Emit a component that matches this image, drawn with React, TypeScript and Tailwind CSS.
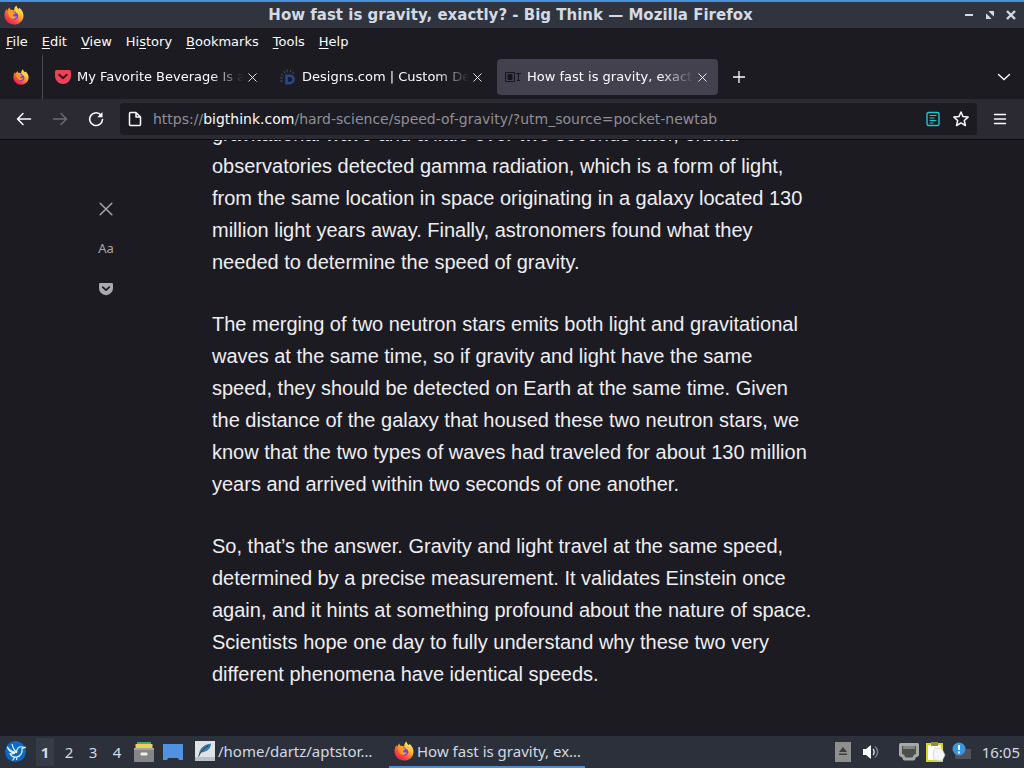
import type { ReactNode } from "react";

const menus = [
  { before: "", key: "F", after: "ile" },
  { before: "", key: "E", after: "dit" },
  { before: "", key: "V", after: "iew" },
  { before: "Hi", key: "s", after: "tory" },
  { before: "", key: "B", after: "ookmarks" },
  { before: "", key: "T", after: "ools" },
  { before: "", key: "H", after: "elp" },
];

const paragraphs = [
  "gravitational wave and a little over two seconds later, orbital observatories detected gamma radiation, which is a form of light, from the same location in space originating in a galaxy located 130 million light years away. Finally, astronomers found what they needed to determine the speed of gravity.",
  "The merging of two neutron stars emits both light and gravitational waves at the same time, so if gravity and light have the same speed, they should be detected on Earth at the same time. Given the distance of the galaxy that housed these two neutron stars, we know that the two types of waves had traveled for about 130 million years and arrived within two seconds of one another.",
  "So, that’s the answer. Gravity and light travel at the same speed, determined by a precise measurement. It validates Einstein once again, and it hints at something profound about the nature of space. Scientists hope one day to fully understand why these two very different phenomena have identical speeds.",
];

function FirefoxLogo({ className }: { className: string }) {
  return (
    <svg viewBox="0 0 20 20" className={className} aria-hidden="true">
      <defs>
        <linearGradient id="ff-body" x1="0.85" y1="0.1" x2="0.2" y2="0.95">
          <stop offset="0" stopColor="#fff44f" />
          <stop offset="0.35" stopColor="#ffb02e" />
          <stop offset="0.65" stopColor="#ff5a36" />
          <stop offset="1" stopColor="#e8175d" />
        </linearGradient>
      </defs>
      <path
        d="M12.4.4c.3 1.8 1.4 2.7 2.6 3.8.2-.6.2-1 .1-1.5 2.7 1.6 4.5 4.9 4.4 8.2-.2 5-4.3 8.7-9.4 8.7-5.3 0-9.5-4-9.6-9C.4 8 1.300 5.500 2.600 3.900c.1 1 .3 1.600.7 2.100.4-1.500 1.100-2.600 2.200-3.500 0 1 .3 1.700.9 2.200 1.500 0 2.700.1 3.700.8C10.100 3.500 10.900 1.400 12.400.4z"
        fill="url(#ff-body)"
      />
      <circle cx="10.200" cy="10.600" r="4.200" fill="#7a3ff0" />
      <path
        d="M4.200 6.400c1.500-1.100 4.100-.8 5.300.8l2.200.5c-.3 1.200-1.900 1.500-2.800 2.300.3 1.500 2.300 2 4 1-.6 2.500-3.500 3.600-5.700 2.400-2.300-1.200-3.500-4.300-3-7z"
        fill="#ff9a26"
      />
      <path d="M12.200 4.500c2.800 1.600 4.200 4.400 3.300 7.300-.7-2.200-1.800-3.400-3.500-4.300-.7-.9-.6-2 .2-3z" fill="#ffcf3c" />
    </svg>
  );
}

function PocketIcon({ className, stroke }: { className: string; stroke: string }) {
  return (
    <svg viewBox="0 0 16 16" className={className} aria-hidden="true">
      <path d="M1.500 1h13A1.500 1.500 0 0 1 16 2.500V7A8 8 0 0 1 0 7V2.500A1.500 1.500 0 0 1 1.500 1z" fill="currentColor" />
      <path d="M4.300 5.800 8 9.300l3.700-3.500" fill="none" stroke={stroke} strokeWidth="2" strokeLinecap="round" strokeLinejoin="round" />
    </svg>
  );
}

function DesignsIcon() {
  return (
    <svg viewBox="0 0 16 16" className="size-4 shrink-0" aria-hidden="true">
      <path d="M6.500 6.700h3.300a3.700 3.700 0 0 1 0 7.400H6.500z" fill="none" stroke="#27498c" strokeWidth="2.600" />
      <g stroke="#42506b" strokeWidth="1">
        <path d="M0 12h3M0 9h3M1 5l2.500 1.500M3.500 2l1.500 2.500M7 .5v3M11 1l-.8 2.500M14 3l-1.500 2" />
      </g>
    </svg>
  );
}

function BigThinkIcon() {
  return (
    <svg viewBox="0 0 16 16" className="size-4 shrink-0" fill="none" stroke="#17161d" aria-hidden="true">
      <path d="M.5 3.500h9v9h-9z" />
      <path d="M3 5.500h4v5H3z" fill="#17161d" />
      <path d="M11 4.500h5M13.500 4.500v7M12 11.500h3" />
    </svg>
  );
}

function CloseIcon({ className }: { className: string }) {
  return (
    <svg viewBox="0 0 12 12" className={className} fill="none" stroke="currentColor" strokeWidth="1.200" strokeLinecap="round" aria-hidden="true">
      <path d="m1 1 10 10M11 1 1 11" />
    </svg>
  );
}

function Tab({ icon, title, active = false }: { icon: ReactNode; title: string; active?: boolean }) {
  return (
    <div
      role="tab"
      aria-selected={active}
      className={`flex h-9 w-[221px] min-w-0 items-center rounded px-2 ${active ? "bg-[#42414d]" : ""}`}
    >
      {icon}
      <span className="ml-1.5 min-w-0 flex-1 overflow-hidden whitespace-nowrap mask-r-from-80% mask-r-to-100%">{title}</span>
      <button aria-label={`Close ${title}`} className="flex h-6 w-4 shrink-0 items-center justify-center">
        <CloseIcon className="size-[9px]" />
      </button>
    </div>
  );
}

function TitleBar() {
  return (
    <header className="flex h-7 shrink-0 items-center border-t-2 border-[#4a90d9] bg-[#2f343f] pr-[7px] pl-1 text-[#d3dae3]">
      <div className="flex flex-1">
        <FirefoxLogo className="size-5" />
      </div>
      <h1 className="font-['DejaVu_Sans',sans-serif] text-[15px] font-bold">
        How fast is gravity, exactly? - Big Think — Mozilla Firefox
      </h1>
      <div className="flex flex-1 justify-end gap-[9px]">
        <button aria-label="Minimize">
          <svg viewBox="0 0 12 12" className="size-3" aria-hidden="true">
            <path d="M2 5h8v2H2z" fill="currentColor" />
          </svg>
        </button>
        <button aria-label="Restore">
          <svg viewBox="0 0 12 12" className="size-3" fill="currentColor" aria-hidden="true">
            <path d="M4.500 2H10v5.500L8 5.800 6.200 4zM2 4.500l2 1.700L5.800 8l1.700 2H2z" />
          </svg>
        </button>
        <button aria-label="Close window">
          <svg viewBox="0 0 12 12" className="size-3" fill="none" stroke="currentColor" strokeWidth="2.400" aria-hidden="true">
            <path d="m2 2 8 8M10 2l-8 8" />
          </svg>
        </button>
      </div>
    </header>
  );
}

function NavBar() {
  return (
    <div className="flex h-10 shrink-0 items-center bg-[#2b2a33] px-2">
      <div className="flex w-28 items-center gap-1">
        <button aria-label="Back" className="flex size-8 items-center justify-center">
          <svg viewBox="0 0 16 16" className="size-4" fill="none" stroke="currentColor" strokeWidth="1.500" strokeLinecap="round" strokeLinejoin="round" aria-hidden="true">
            <path d="M14.500 8h-13M7 2.500 1.500 8 7 13.500" />
          </svg>
        </button>
        <button aria-label="Forward" disabled className="flex size-8 items-center justify-center text-[#6b6a75]">
          <svg viewBox="0 0 16 16" className="size-4" fill="none" stroke="currentColor" strokeWidth="1.500" strokeLinecap="round" strokeLinejoin="round" aria-hidden="true">
            <path d="M1.500 8h13M9 2.500 14.500 8 9 13.500" />
          </svg>
        </button>
        <button aria-label="Reload" className="flex size-8 items-center justify-center">
          <svg viewBox="0 0 16 16" className="size-4" fill="none" stroke="currentColor" strokeWidth="1.600" strokeLinecap="round" aria-hidden="true">
            <path d="M13 4a6.400 6.400 0 1 0 1.500 4.500" />
            <path d="M14.500 1v5.200H9.300z" fill="currentColor" stroke="none" />
          </svg>
        </button>
      </div>
      <div className="flex h-8 min-w-0 flex-1 items-center rounded bg-[#1c1b22] pr-0.5 pl-[7px]">
        <svg viewBox="0 0 16 16" className="size-4 shrink-0" fill="none" stroke="currentColor" strokeWidth="1.500" strokeLinejoin="round" aria-hidden="true">
          <path d="M3.500 1.500h5.500l4.500 4.500v7.500a1 1 0 0 1-1 1h-9a1 1 0 0 1-1-1v-11a1 1 0 0 1 1-1zM9 1.500V6h4.500" />
        </svg>
        <div className="ml-2.5 min-w-0 flex-1 truncate text-[14px] text-[#8f8f98]">
          https://<span className="text-[#fbfbfe]">bigthink.com</span>/hard-science/speed-of-gravity/?utm_source=pocket-newtab
        </div>
        <button aria-label="Toggle reader view" className="flex w-7 justify-center text-[#1fc6cf]">
          <svg viewBox="0 0 16 16" className="size-4" fill="none" stroke="currentColor" strokeWidth="1.400" strokeLinecap="round" aria-hidden="true">
            <rect x="2" y="1.500" width="12" height="13" rx="1.500" />
            <path d="M5 4.500h6M5 7h4M5 9.500h6M5 12h3" strokeWidth="1.100" />
          </svg>
        </button>
        <button aria-label="Bookmark this page" className="flex w-7 justify-center">
          <svg viewBox="0 0 16 16" className="size-4" fill="none" stroke="currentColor" strokeWidth="1.500" strokeLinejoin="round" aria-hidden="true">
            <path d="m8 1 2 4.600 5.100.5-3.800 3.400 1.100 5L8 11.900l-4.400 2.600 1.100-5L.9 6.100 6 5.600z" />
          </svg>
        </button>
      </div>
      <button aria-label="Open application menu" className="ml-[7px] flex size-8 items-center justify-center">
        <svg viewBox="0 0 14 14" className="size-3.5" stroke="currentColor" strokeWidth="1.400" strokeLinecap="round" aria-hidden="true">
          <path d="M1.500 2.500h11M1.500 7h11M1.500 11.500h11" />
        </svg>
      </button>
    </div>
  );
}

function Reader() {
  return (
    <main className="grid min-h-0 flex-1 grid-cols-[1fr_minmax(0,600px)_1fr] overflow-hidden border-t border-[#0c0c0d] bg-[#1c1b22]">
      <aside className="flex flex-col items-center pt-[49px] text-[#a9a9b0]">
        <button aria-label="Close reader view" className="flex size-10 items-center justify-center">
          <CloseIcon className="size-3.5" />
        </button>
        <button aria-label="Type controls" className="size-10 font-['Noto_Sans',sans-serif] text-[13px]">
          Aa
        </button>
        <button aria-label="Save to Pocket" className="flex size-10 items-center justify-center">
          <PocketIcon className="size-3.5" stroke="#1c1b22" />
        </button>
      </aside>
      {/* scrolled near the end, so the top line runs under the toolbar */}
      <article className="flex min-h-0 flex-col justify-end gap-[30px] pb-[46px] font-['Liberation_Sans',sans-serif] text-[20px] leading-8 text-[#eeeef2]">
        {paragraphs.map((text) => (
          <p key={text}>{text}</p>
        ))}
      </article>
    </main>
  );
}

function Taskbar() {
  return (
    <footer className="flex h-8 shrink-0 items-center bg-[#2b303b] px-1 font-['Noto_Sans',sans-serif] text-[15px] text-[#d3dae3]">
      <button aria-label="Applications" className="mr-2">
        <svg viewBox="0 0 24 24" className="size-6" aria-hidden="true">
          <circle cx="11.500" cy="11.500" r="10.500" fill="#0b6bc4" />
          <path d="M3.500 7c2 3.500 5 5 9 5.500C12.500 8.500 15 6 18.500 7l3 .3-3.500 1c.8 4.500-1.500 8-5.500 8.700-3 .3-5.500-1-6.500-3.500 1.500.5 3 .5 4.500-.3C7 12.500 4 10.500 3.500 7z" fill="none" stroke="#e9f3fc" strokeWidth="1.200" strokeLinejoin="round" />
          <path d="M8 4c.5 3.500 2 6 4.500 8.500M11 17l-2.500 3.500M13 17l-.5 3" fill="none" stroke="#e9f3fc" strokeWidth="1.200" />
        </svg>
      </button>
      <nav aria-label="Desktops" className="flex">
        <button className="mr-[3px] h-7 w-[18px] bg-[#363b48] font-bold">1</button>
        <button className="h-7 w-6">2</button>
        <button className="h-7 w-6">3</button>
        <button className="h-7 w-6">4</button>
      </nav>
      <button aria-label="File manager" className="ml-1">
        <svg viewBox="0 0 22 22" className="size-[22px]" aria-hidden="true">
          <path d="M4 1h14v5H4z" fill="#3fa796" />
          <path d="M2.500 3h17v5h-17z" fill="#e8d44d" />
          <path d="M1 7h20v13a1 1 0 0 1-1 1H2a1 1 0 0 1-1-1z" fill="#868686" />
          <path d="M1 7h20v2H1z" fill="#a3a3a3" />
          <rect x="7.500" y="11.500" width="7" height="3" rx="1" fill="#eee" />
        </svg>
      </button>
      <button aria-label="Show desktop" className="ml-2">
        <svg viewBox="0 0 20 18" className="h-[18px] w-5" aria-hidden="true">
          <path d="M0 1h20v16h-4l-1-2H5l-1 2H0z" fill="#4f92e0" />
        </svg>
      </button>
      <button className="ml-3 flex h-8 w-48 items-center border-b-2 border-transparent">
        <svg viewBox="0 0 20 20" className="size-5 shrink-0" aria-hidden="true">
          <path d="M0 0h20v20H0z" fill="#dfe3e6" />
          <path d="M0 16h20v4H0z" fill="#b9c0c6" />
          <path d="M4 14C4 8 9 3 16 2.500c0 5-4 8.500-10 9z" fill="#3c78a8" />
          <path d="M3.500 15.500C6 10 9 7 13.500 4.500" fill="none" stroke="#1e3d5a" />
        </svg>
        <span className="ml-[3px]">/home/dartz/aptstor…</span>
      </button>
      <button className="ml-0.5 flex h-8 w-[196px] items-center border-b-2 border-[#4a90d9] pl-[5px]">
        <FirefoxLogo className="size-5 shrink-0" />
        <span className="ml-[3px]">How fast is gravity, ex…</span>
      </button>
      <div className="ml-auto flex items-center">
        <button aria-label="Eject media">
          <svg viewBox="0 0 16 20" className="h-5 w-4" aria-hidden="true">
            <path d="M0 0h16v20H0z" fill="#8e8e8e" />
            <path d="m8 5 4 5H4zM4 11.500h8V13H4z" fill="#3d3d3d" />
          </svg>
        </button>
        <button aria-label="Volume" className="ml-3">
          <svg viewBox="0 0 16 16" className="size-4" fill="none" aria-hidden="true">
            <path d="M0 5h3l5-4v14l-5-4H0z" fill="#fff" />
            <path d="M10 5c1.500 1.500 1.500 4.500 0 6" stroke="#d3dae3" strokeWidth="1.500" />
            <path d="M12 2.500c3.500 3 3.500 8 0 11" stroke="#7c828d" strokeWidth="1.500" />
          </svg>
        </button>
        <button aria-label="Network" className="ml-5">
          <svg viewBox="0 0 20 18" className="h-[18px] w-5" aria-hidden="true">
            <path d="M1.500 1.500h17v10.500l-2.500 1-1.500 3h-9L4 13l-2.500-1z" fill="#4b4e4b" stroke="#a6a8a4" strokeWidth="3" strokeLinejoin="round" />
            <path d="M5 3v3M7 3v3M9 3v3M11 3v3M13 3v3M15 3v3" stroke="#b9bbb7" />
          </svg>
        </button>
        <button aria-label="Clipboard" className="ml-[7px]">
          <svg viewBox="0 0 20 20" className="size-5" aria-hidden="true">
            <path d="M1 2h15v17H1z" fill="#fff" stroke="#d6d526" strokeWidth="2" />
            <path d="M5 0h7v4H5z" fill="#8f8f42" />
            <path d="m9 6 7 1 3 6-3 6-8-1-1-7z" fill="#f5f5f5" stroke="#c9c9c9" strokeWidth=".6" />
          </svg>
        </button>
        <button aria-label="Update notifications" className="ml-1.5">
          <svg viewBox="0 0 20 20" className="size-5" aria-hidden="true">
            <path d="M6 7h13v10H3v-4z" fill="#50515a" />
            <circle cx="7" cy="7" r="6.500" fill="#3b97dc" />
            <path d="M7 3v5M7 9.500v2" stroke="#fff" strokeWidth="2" />
          </svg>
        </button>
        <time className="ml-2.5">16:05</time>
      </div>
    </footer>
  );
}

export default function App() {
  return (
    <div className="flex h-screen flex-col overflow-hidden bg-[#1c1b22] font-['DejaVu_Sans',sans-serif] text-[13px] text-[#fbfbfe]">
      <TitleBar />

      <nav aria-label="Menu bar" className="flex h-[27px] shrink-0 items-center gap-3.5 px-1.5">
        {menus.map((m) => (
          <button key={m.key + m.after}>
            {m.before}
            <span className="underline underline-offset-2">{m.key}</span>
            {m.after}
          </button>
        ))}
      </nav>

      {/* tab strip */}
      <div role="tablist" className="flex h-11 shrink-0 items-center">
        <button aria-label="Firefox View" className="flex h-full w-[43px] shrink-0 items-center justify-center border-r border-[#4a4a55]">
          <FirefoxLogo className="size-4" />
        </button>
        <div className="ml-1 flex min-w-0 gap-1">
          <Tab icon={<PocketIcon className="size-4 shrink-0 text-[#ef4056]" stroke="#3a1520" />} title="My Favorite Beverage Is a" />
          <Tab icon={<DesignsIcon />} title="Designs.com | Custom Design" />
          <Tab active icon={<BigThinkIcon />} title="How fast is gravity, exactly?" />
        </div>
        <button aria-label="New tab" className="ml-[5px] flex size-8 items-center justify-center">
          <svg viewBox="0 0 12 12" className="size-3" stroke="currentColor" strokeWidth="1.300" aria-hidden="true">
            <path d="M6 0v12M0 6h12" />
          </svg>
        </button>
        <button aria-label="List all tabs" className="mr-1 ml-auto flex size-8 items-center justify-center">
          <svg viewBox="0 0 14 14" className="size-3.5" fill="none" stroke="currentColor" strokeWidth="1.400" strokeLinecap="round" aria-hidden="true">
            <path d="m1.500 4.500 5.500 5 5.500-5" />
          </svg>
        </button>
      </div>

      <NavBar />
      <Reader />
      <Taskbar />
    </div>
  );
}
